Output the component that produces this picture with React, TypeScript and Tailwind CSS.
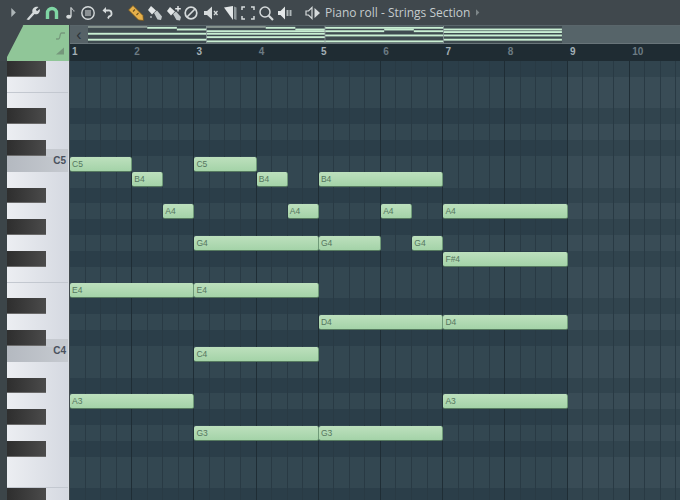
import React from 'react';

const ROW = 15.84;
const STEP = 15.56;
const BLACK = [0, 3, 5, 8, 10, 12, 15, 17, 20, 22, 24, 27];
const ROW_COUNT = 28;

// name, row (0 = F#5 at the top of the grid), start and end in quarter bars
const NOTES: [string, number, number, number][] = [
  ['C5', 6, 0, 4],
  ['B4', 7, 4, 6],
  ['A4', 9, 6, 8],
  ['C5', 6, 8, 12],
  ['B4', 7, 12, 14],
  ['A4', 9, 14, 16],
  ['G4', 11, 8, 16],
  ['G4', 11, 16, 20],
  ['B4', 7, 16, 24],
  ['A4', 9, 20, 22],
  ['G4', 11, 22, 24],
  ['A4', 9, 24, 32],
  ['F#4', 12, 24, 32],
  ['E4', 14, 0, 8],
  ['E4', 14, 8, 16],
  ['D4', 16, 16, 24],
  ['D4', 16, 24, 32],
  ['C4', 18, 8, 16],
  ['A3', 21, 0, 8],
  ['A3', 21, 24, 32],
  ['G3', 23, 8, 16],
  ['G3', 23, 16, 24],
];

const Icon = ({ children, className = '' }: { children: React.ReactNode; className?: string }) => (
  <svg viewBox="0 0 16 16" className={`w-4 h-4 shrink-0 ${className}`} fill="none">
    {children}
  </svg>
);

const Toolbar = () => (
  <div className="h-[25px] bg-[#40484d] flex items-center relative text-[#d5dadb]">
    <div className="w-[11px]" />
    <svg viewBox="0 0 6 10" className="w-[6px] h-[9px] shrink-0 mr-[8px]"><path d="M0 0l5 5-5 5z" fill="#aeb6b8" /></svg>
    {/* wrench */}
    <Icon className="mr-[3px]"><path d="M1.500 14.500L7.500 7.500C6.500 4 9.500 1 13.500 2L10.800 4.600 12 6.200l2.800-2.200C15.500 8 12.500 10 9.500 9L4 15z" fill="#d5dadb" /></Icon>
    {/* magnet */}
    <Icon className="mr-[1px]"><path d="M3.500 14V8a4.500 4.500 0 0 1 9 0v6" stroke="#7fd6a4" strokeWidth="3.400" /></Icon>
    {/* note */}
    <Icon className="mr-[3px]"><path d="M10 2.500v9" stroke="#d5dadb" strokeWidth="1.300" /><path d="M10 2.500c1 2 3 2 3 4" stroke="#d5dadb" /><ellipse cx="7.800" cy="11.800" rx="2.600" ry="2" fill="#d5dadb" /></Icon>
    {/* menu circle */}
    <Icon className="mr-[3px]"><circle cx="8" cy="8" r="6.200" stroke="#d5dadb" strokeWidth="1.400" /><path d="M5 6h6M5 8h6M5 10h6" stroke="#d5dadb" strokeWidth="1.100" /></Icon>
    {/* undo */}
    <Icon className="mr-[13px]"><path d="M5 5.500h4a3 3 0 0 1 1 6l-1 2" stroke="#d5dadb" strokeWidth="1.800" /><path d="M7 2L3.500 5.500 7 8.500z" fill="#d5dadb" /></Icon>
    {/* pencil */}
    <Icon className="mr-[3px]"><path d="M.5 5L5 .5 15 10.500 15.500 15.500 10.500 15z" fill="#e6b04a" stroke="#6e5320" strokeWidth="0.800" /><path d="M5 6.500l2-2M8.500 10l2-2" stroke="#6e5320" strokeWidth="1.100" /></Icon>
    {/* brush */}
    <Icon className="mr-[3px]"><path d="M4 1l5 4.500-4 4L1 5z" fill="#e3e7e8" /><path d="M7 8l3-2.500 5 6-1 3.500-3.500-.5z" fill="#c2c9cb" /><circle cx="4" cy="12" r="1" fill="#aeb6b8" /></Icon>
    {/* paint */}
    <Icon className="mr-[1px]"><path d="M4 2l5 4.500-4 4L1 6z" fill="#e3e7e8" /><path d="M7 9l3-2.500 5 5.500-1 3.500-3.500-.5z" fill="#c2c9cb" /><path d="M12 1v5.500M9.200 3.700h5.600" stroke="#e3e7e8" strokeWidth="1.400" /></Icon>
    {/* prohibit */}
    <Icon className="mr-[4px]"><circle cx="8" cy="8" r="5.800" stroke="#d5dadb" strokeWidth="1.700" /><path d="M4 12l8-8" stroke="#d5dadb" strokeWidth="1.700" /></Icon>
    {/* mute */}
    <Icon className="mr-[3px]"><path d="M1 6h3l5-4.500v13L4 10H1z" fill="#d5dadb" /><path d="M11 6l3.500 4M14.500 6L11 10" stroke="#d5dadb" strokeWidth="1.300" /></Icon>
    {/* slice */}
    <Icon className="mr-[2px]"><path d="M2 2.500L11 1v14z" fill="#e3e7e8" /><path d="M12 1.500l2.500 1V15l-2.500-1z" fill="#8f989b" /></Icon>
    {/* select */}
    <Icon className="mr-[2px]"><path d="M2 5V2h3M11 2h3v3M14 11v3h-3M5 14H2v-3" stroke="#d5dadb" strokeWidth="1.500" /></Icon>
    {/* zoom */}
    <Icon className="mr-[3px]"><circle cx="7" cy="7" r="5" stroke="#d5dadb" strokeWidth="1.500" /><path d="M10.800 10.800L15 15" stroke="#d5dadb" strokeWidth="2.200" /></Icon>
    {/* speaker */}
    <Icon className="mr-[12px]"><path d="M1 6h2.500L8 1.500v13L3.500 10H1z" fill="#e3e7e8" /><path d="M10.500 5v6M13.500 5v6" stroke="#aeb6b8" strokeWidth="2" /></Icon>
    {/* preview */}
    <Icon className="mr-[4px]"><path d="M7 2.500v11L3.500 10H1V6h2.500z" stroke="#d5dadb" strokeWidth="1.200" /><path d="M9.500 3L15 8l-5.500 5z" fill="#d5dadb" /></Icon>
    <span className="text-[12px] leading-none text-[#c5cccd] font-['Open_Sans',sans-serif]">Piano roll - Strings Section</span>
    <svg viewBox="0 0 6 10" className="w-[4px] h-[7px] shrink-0 ml-[6px]"><path d="M0 0l5 5-5 5z" fill="#7d8689" /></svg>
  </div>
);

const Corner = () => (
  <div className="w-[70px] shrink-0 bg-[#40484d]">
    <svg viewBox="0 0 70 36" className="w-[70px] h-[36px] block">
      <path d="M23 1Q22 0 24 0H69V36H7V32z" fill="#90c698" />
      <path d="M56 14h2.500c2 0 1-6 3-6H65" stroke="#76997c" strokeWidth="1.300" fill="none" />
      <path d="M56 29.500l8-7v7z" fill="#75977b" />
    </svg>
  </div>
);

const Strip = () => (
  <div className="h-[19px] bg-[#4d5a5f] border-t border-t-[#5a666b] border-b border-b-[#69757a] flex">
    <div className="w-[18px] bg-[#566267] flex items-center justify-center text-[#2b3337] text-[16px] leading-none font-['Liberation_Sans',sans-serif]">‹</div>
    <svg viewBox="0 0 474 17" className="w-[474px] h-[17px] block shrink-0">
      <rect width="474" height="17" fill="#3f4b50" />
      {NOTES.map(([name, row, from, to], i) => (
        <rect key={i} x={from * 14.81} y={(row - 6) * 0.85} width={(to - from) * 14.81} height="1.900" fill={row === 6 ? '#87958f' : '#c9efd3'} />
      ))}
      {/* bar separators of the overview */}
      <path d="M118.500 0v17M237 0v17M355.500 0v17" stroke="#8d9a9c" strokeWidth="0.800" />
    </svg>
    <div className="flex-1 bg-[#566469]" />
  </div>
);

const Ruler = () => (
  <div className="h-[17px] bg-[#1f2c33] flex">
    {Array.from({ length: 10 }, (_, i) => (
      <div key={i} className="w-[62.25px] shrink-0 pl-[2px] text-[10px] leading-[15px] font-bold font-['Liberation_Sans',sans-serif]">
        <span className={i % 2 === 0 ? 'text-[#a3b0b6]' : 'text-[#6c7b83]'}>{i + 1}</span>
      </div>
    ))}
  </div>
);

const Keyboard = () => (
  <div className="w-[62px] shrink-0 flex flex-col relative border-r-[1px] border-r-[#d8dde2]">
    {Array.from({ length: ROW_COUNT }, (_, r) => {
      const isBlack = BLACK.includes(r);
      const isC = r === 6 || r === 18;
      const isSeam = r === 1 || r === 13 || r === 26;
      return (
        <div key={r} className={`shrink-0 h-[15.84px] flex bg-gradient-to-r ${isC ? 'from-[#b4b9c0] to-[#c6cad0]' : 'from-[#eceef2] to-[#d5d9e1]'} ${isSeam ? 'border-b border-b-[#c3c8d0]' : ''}`}>
          {isBlack && <div className="w-[39px] bg-gradient-to-r from-[#2e2e2e] to-[#4b4b4b] border-b border-b-[#6a6a6a]" />}
        </div>
      );
    })}
    {/* C octave shading and labels */}
    <div className="absolute left-[39px] right-0 top-[88px] h-[8px] bg-[#c6cad0]" />
    <div className="absolute left-[39px] right-0 top-[278px] h-[8px] bg-[#c6cad0]" />
    <span className="absolute right-[2px] top-[93px] text-[10px] leading-[14px] font-bold text-[#4a525d] font-['Liberation_Sans',sans-serif]">C5</span>
    <span className="absolute right-[2px] top-[283px] text-[10px] leading-[14px] font-bold text-[#4a525d] font-['Liberation_Sans',sans-serif]">C4</span>
  </div>
);

const Grid = () => (
  <div className="flex-1 relative overflow-hidden bg-[#2c3f4a] ml-[1px]">
    <div className="flex flex-col">
      {Array.from({ length: ROW_COUNT }, (_, r) => (
        <div key={r} className={`shrink-0 h-[15.84px] ${BLACK.includes(r) ? 'bg-[#2b3e49]' : 'bg-[#334751]'}`} />
      ))}
    </div>
    {/* everything past the end of the pattern is a bit lighter */}
    <div className="absolute top-0 bottom-0 left-[498px] right-0 bg-white/[0.03]" />
    {/* vertical lines over the rows */}
    <div className="absolute inset-0 flex">
      {Array.from({ length: 40 }, (_, i) => (
        <div key={i} className={`shrink-0 w-[15.56px] border-r ${i % 4 === 3 ? 'border-r-[#1f2d35]' : 'border-r-[#293a44]'}`} />
      ))}
    </div>
    {NOTES.map(([name, row, from, to], i) => (
      <div
        key={i}
        className="absolute h-[15px] rounded-[2px] bg-gradient-to-b from-[#bde0bd] to-[#a4d3a8] border-b-[1.5px] border-b-[#567a60] border-r border-r-[#6f9a78] pl-[2px] text-[8.5px] leading-[14px] text-[#55765e] font-['Liberation_Sans',sans-serif]"
        style={{ top: row * ROW + 0.5, left: from * STEP, width: (to - from) * STEP }}
      >
        {name}
      </div>
    ))}
  </div>
);

export default function App() {
  return (
    <div className="w-[680px] h-[500px] overflow-hidden flex flex-col bg-[#40484d]">
      <Toolbar />
      <div className="h-[36px] flex shrink-0">
        <Corner />
        <div className="flex-1 flex flex-col min-w-0">
          <Strip />
          <Ruler />
        </div>
      </div>
      <div className="flex-1 flex min-h-0">
        <div className="w-[7px] shrink-0 bg-[#3c4549]" />
        <Keyboard />
        <Grid />
      </div>
    </div>
  );
}
